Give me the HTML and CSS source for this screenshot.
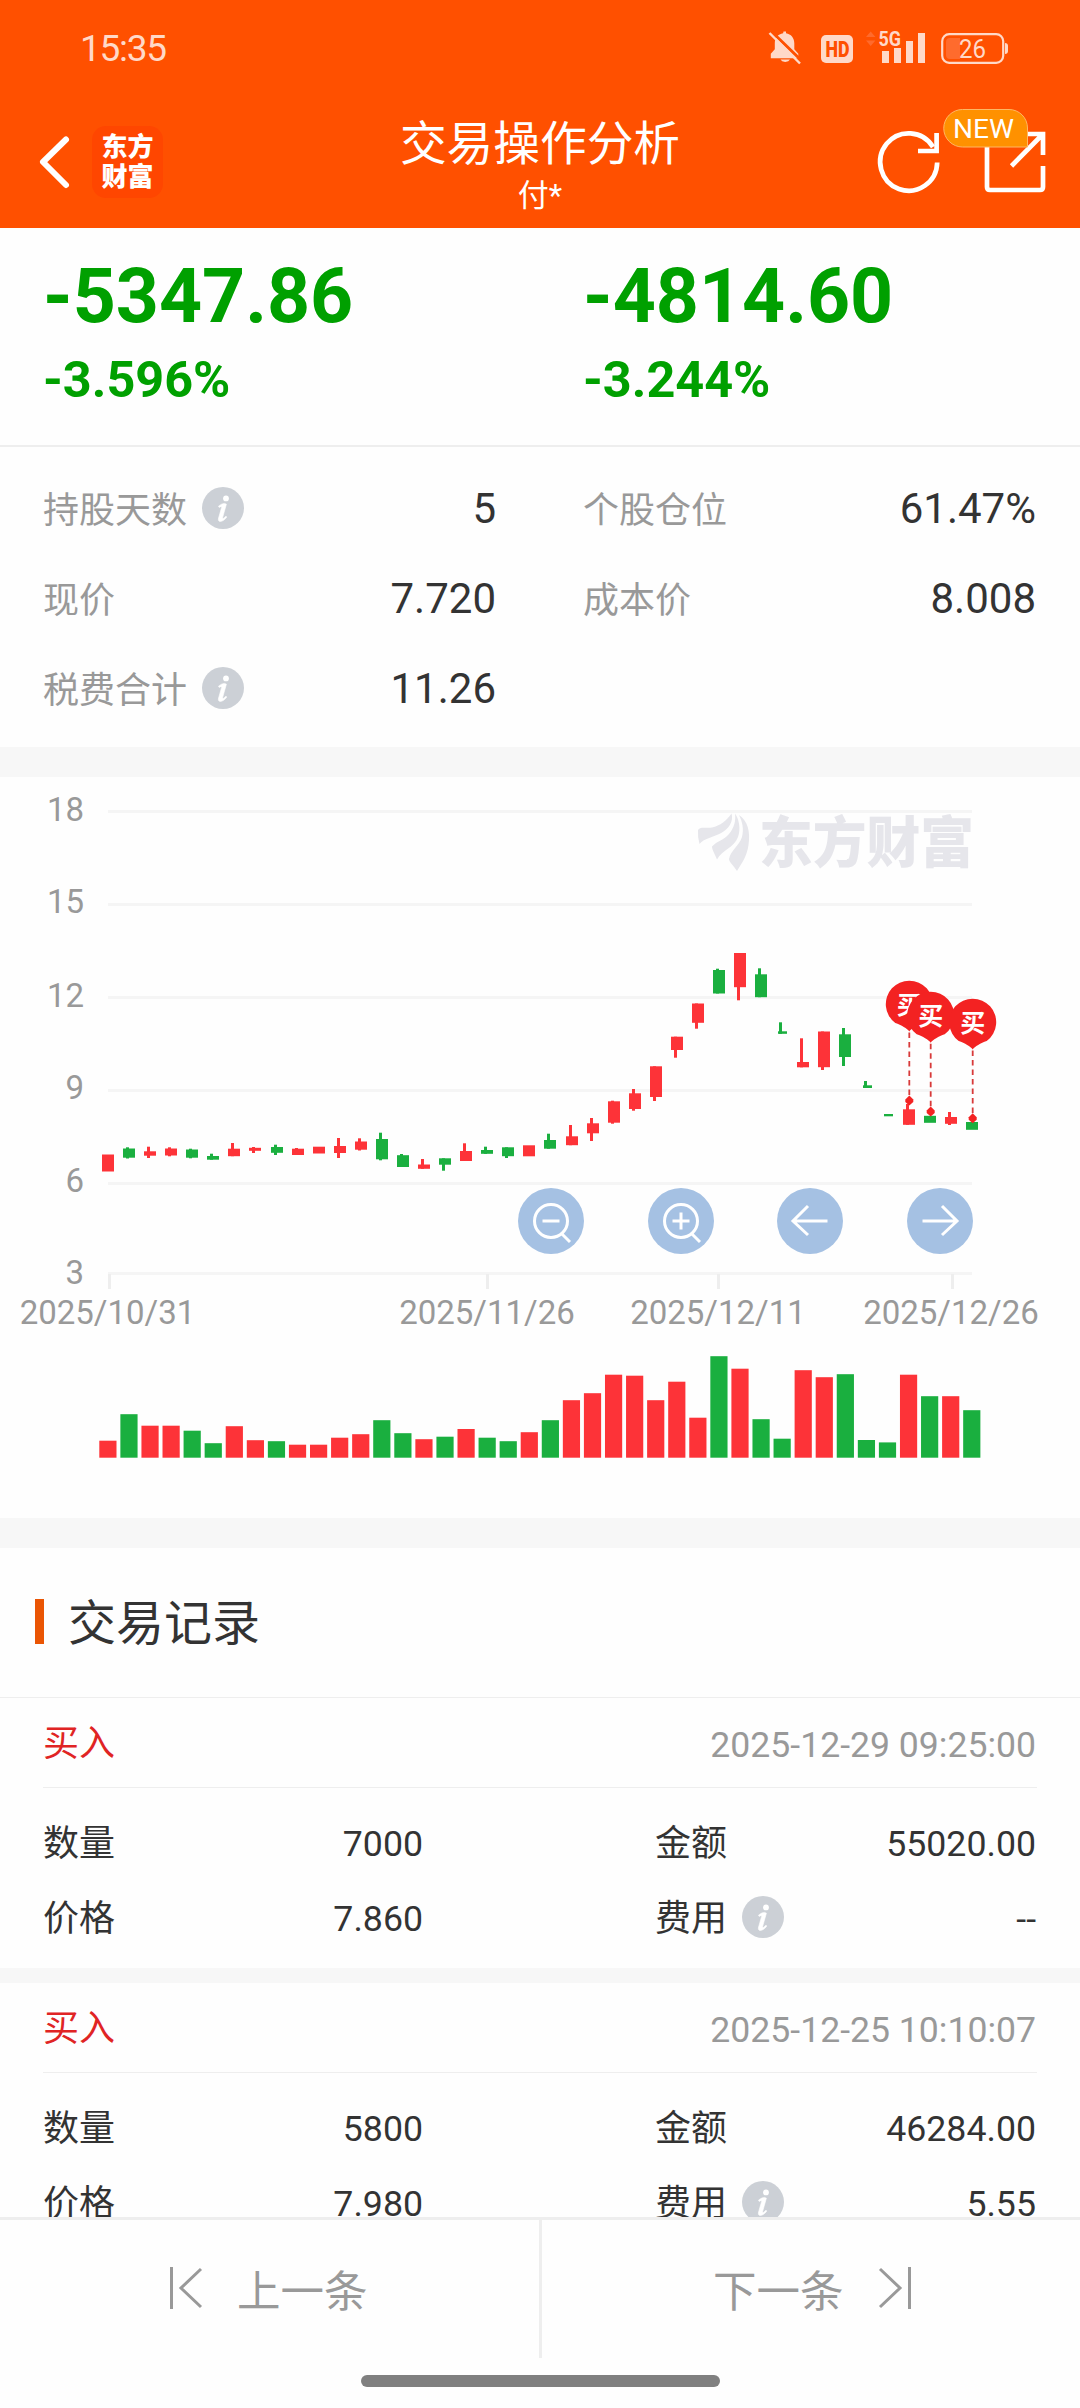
FILE: index.html
```html
<!DOCTYPE html>
<html lang="zh-CN">
<head>
<meta charset="utf-8">
<title>交易操作分析</title>
<link rel="stylesheet" href="styles.css">
</head>
<body>
<svg class="defs" width="0" height="0">
  <symbol id="info" viewBox="0 0 42 42">
    <circle cx="21" cy="21" r="21" fill="#ccd0d6"/>
    <circle cx="24" cy="11.4" r="2.9" fill="#fff"/>
    <path d="M16.5 19.2 C18.6 17.4 20.6 16.6 22.6 16.4 L24.4 17.2 L20.6 30.6 C20.5 31.6 21.2 31.6 22 31 L24 29.2 L24.8 30 C22.8 32.8 20.4 34.4 18.4 34.4 C16.6 34.4 16 33 16.6 31 L19.6 20.4 C19.8 19.4 19 19.4 17.2 20.4 Z" fill="#fff" stroke="#fff" stroke-width=".6"/>
  </symbol>
  <symbol id="pin" viewBox="-26 -26 52 56" overflow="visible">
    <path d="M0 27 C-2 24 -8 20.5 -14 18.5 A23.5 23.5 0 1 1 14 18.5 C8 20.5 2 24 0 27 Z" fill="#f32222"/>
  </symbol>
</svg>

<header class="header">
  <div class="status">
    <span class="clock">15:35</span>
    <svg class="status-icons" width="250" height="50" viewBox="762 24 250 50" fill="#ffd9c8">
      <path d="M783.5 31.5 h2.500 v1.800 c5 .8 8.300 4.700 8.300 10 v6 l4 4.500 v4.500 h-27.500 v-4.500 l4 -4.500 v-6 c0 -5.300 3.300 -9.200 8.300 -10 z M780.500 59.500 h9.500 a5 3.500 0 0 1 -9.500 0 z"/>
      <path d="M772 32 L803 62" stroke="#ff5000" stroke-width="3"/>
      <path d="M769.500 33 L800 63.500" stroke="#ffd9c8" stroke-width="2.400"/>
      <rect x="821" y="35" width="32" height="28" rx="5"/>
      <text x="825.500" y="57.200" font-size="22" font-weight="900" fill="#ff5000" textLength="24" lengthAdjust="spacingAndGlyphs">HD</text>
      <path d="M866 37 l4.700 -5.500 l4.700 5.500 z M866 40.500 h9.400 l-4.700 5.500 z" fill="#ff6a2c"/>
      <text x="878.500" y="46.300" font-size="20.500" font-weight="700" textLength="22.500" lengthAdjust="spacingAndGlyphs">5G</text>
      <path d="M882 51 h7 v12 h-7 z M894 48 h7 v15 h-7 z M906 41 h7 v22 h-7 z M918 33 h7 v30 h-7 z"/>
      <rect x="942.200" y="34.200" width="61" height="28.600" rx="7" fill="none" stroke="#ffd9c8" stroke-width="2.200"/>
      <path d="M950 38 h10 v21 h-10 a4 4 0 0 1 -4 -4 v-13 a4 4 0 0 1 4 -4 z" fill="#ff6b2d"/>
      <path d="M1005 43 a3 3 0 0 1 3 3 v5 a3 3 0 0 1 -3 3 z"/>
      <text x="959" y="57.500" font-size="25" textLength="27" lengthAdjust="spacingAndGlyphs">26</text>
    </svg>
  </div>
  <div class="titlebar">
    <div class="brand">
      <svg width="34" height="56" viewBox="37 135 34 56"><path d="M66 140.500 L43 163 L66 186" fill="none" stroke="#fff" stroke-width="6" stroke-linecap="round" stroke-linejoin="round"/></svg>
      <div class="logo"><span>东方</span><span>财富</span></div>
    </div>
    <div class="titles">
      <h1>交易操作分析</h1>
      <p>付*</p>
    </div>
    <svg class="actions" width="180" height="100" viewBox="870 104 180 100">
      <g fill="none" stroke="#fff" stroke-width="4.700">
        <path d="M937.200 162.500 A28.500 28.700 0 1 1 933 147"/>
        <path d="M936.600 133 V151 H918"/>
        <path d="M987 145 V187 Q987 190 990 190 H1040 Q1043 190 1043 187 V166"/>
        <path d="M1024 134 H1043 V155 M1043 134 L1011.500 166"/>
      </g>
      <path d="M962.500 109.500 H1009 A18.500 18.500 0 0 1 1027.500 128 V147 H962.500 A18.700 18.700 0 0 1 962.500 109.500 Z" fill="#ff9100" stroke="#ffb763" stroke-width="1"/>
      <text x="953" y="138" font-size="26" fill="#fff" textLength="61" lengthAdjust="spacingAndGlyphs">NEW</text>
    </svg>
  </div>
</header>

<main class="content">
  <section class="profit">
    <div><strong>-5347.86</strong><em>-3.596%</em></div>
    <div><strong>-4814.60</strong><em>-3.244%</em></div>
  </section>

  <section class="stats">
    <div class="stat"><label>持股天数</label><svg class="info"><use href="#info"/></svg><b>5</b></div>
    <div class="stat"><label>个股仓位</label><b>61.47%</b></div>
    <div class="stat"><label>现价</label><b>7.720</b></div>
    <div class="stat"><label>成本价</label><b>8.008</b></div>
    <div class="stat"><label>税费合计</label><svg class="info"><use href="#info"/></svg><b>11.26</b></div>
  </section>

  <section class="chart">
    <svg width="1080" height="741" viewBox="0 777 1080 741">
      <path d="M108 811.500 H972 M108 904.500 H972 M108 997.500 H972 M108 1090.500 H972 M108 1183.500 H972 M108 1273.500 H972" stroke="#f5f5f5" stroke-width="3"/>
      <path d="M109.500 1274 V1289 M487.500 1274 V1289 M718.500 1274 V1289 M952.500 1274 V1289" stroke="#eee" stroke-width="3"/>
      <g class="axis" text-anchor="end">
        <text x="84" y="821">18</text><text x="84" y="913">15</text><text x="84" y="1007">12</text>
        <text x="84" y="1099">9</text><text x="84" y="1192">6</text><text x="84" y="1284">3</text>
      </g>
      <g class="axis" text-anchor="middle">
        <text x="107.500" y="1324.300">2025/10/31</text><text x="487" y="1324.300">2025/11/26</text>
        <text x="718" y="1324.300">2025/12/11</text><text x="951" y="1324.300">2025/12/26</text>
      </g>
      <g fill="#e6e6eb">
        <path d="M698 830 C700 826 706 828.500 712 827.500 C720 826 727 820 731.500 813.500 C734 822 728 829 722 832.500 C715 837 704 838 699.500 844 Q697.500 837 698 830 Z"/>
        <path d="M735 813.500 C739 819 741 829 738 837 C734 848 722 850 717 859.500 C715 854 712 850 712 846.500 C717 841 724 840 729 834 C734 828 736 821 735 813.500 Z"/>
        <path d="M739 815 C748 821 750.500 832 748.500 845 C747 856 742 863 737 871 C734 866 729 862 729 859 C731 850 739 846 742 837 C744 829 742.500 822 739 815 Z"/>
        <text class="watermark" x="759" y="862" textLength="215" lengthAdjust="spacingAndGlyphs">东方财富</text>
      </g>
      <g id="candles"></g>
      <g id="volumes"></g>
      <g id="trades"></g>
    </svg>
    <nav class="controls">
      <svg viewBox="-33 -33 66 66"><circle r="33"/><path d="M-8.500 0 H8.500 M11 13 L19 21"/><circle class="ring" r="16.500"/></svg>
      <svg viewBox="-33 -33 66 66"><circle r="33"/><path d="M-8.500 0 H8.500 M0 -8.500 V8.500 M11 13 L19 21"/><circle class="ring" r="16.500"/></svg>
      <svg viewBox="-33 -33 66 66"><circle r="33"/><path d="M17.500 0 H-16.500 M-2 -15 L-17 0 L-2 14"/></svg>
      <svg viewBox="-33 -33 66 66"><circle r="33"/><path d="M-17.500 0 H16.500 M2 -15 L17 0 L2 14"/></svg>
    </nav>
  </section>

  <section class="records">
    <h2>交易记录</h2>
    <article class="record">
      <header><span>买入</span><time>2025-12-29 09:25:00</time></header>
      <div class="rows">
        <div><label>数量</label><b>7000</b></div>
        <div><label>金额</label><b>55020.00</b></div>
        <div><label>价格</label><b>7.860</b></div>
        <div><label>费用</label><svg class="info"><use href="#info"/></svg><b>--</b></div>
      </div>
    </article>
    <article class="record">
      <header><span>买入</span><time>2025-12-25 10:10:07</time></header>
      <div class="rows">
        <div><label>数量</label><b>5800</b></div>
        <div><label>金额</label><b>46284.00</b></div>
        <div><label>价格</label><b>7.980</b></div>
        <div><label>费用</label><svg class="info"><use href="#info"/></svg><b>5.55</b></div>
      </div>
    </article>
  </section>
</main>

<footer class="footer">
  <div class="pager">
    <button class="prev"><svg width="34" height="44" viewBox="0 0 34 44"><path d="M2.500 1 V43 M32 3 L12 22 L32 41"/></svg>上一条</button>
    <button class="next">下一条<svg width="34" height="44" viewBox="0 0 34 44"><path d="M31.500 1 V43 M2 3 L22 22 L2 41"/></svg></button>
  </div>
  <div class="home"></div>
</footer>
<script src="chart.js"></script>
</body>
</html>
```
FILE: styles.css
```css
* { box-sizing: border-box; margin: 0; padding: 0; }

body {
  width: 1080px;
  height: 2408px;
  display: flex;
  flex-direction: column;
  overflow: hidden;
  background: #fefefe;
  color: #333;
  font-family: Roboto, "Noto Sans CJK SC", sans-serif;
}

svg { display: block; flex: none; }
.defs { position: absolute; }
b, em, strong, h1, h2 { font-weight: 400; font-style: normal; }

/* header */
.header { flex: none; height: 228px; background: #ff5000; color: #fff; }
.status { display: flex; justify-content: space-between; height: 96px; padding: 24px 68px 0 80px; }
.clock { color: #ffd9c8; font-size: 37px; line-height: 50px; letter-spacing: -1.3px; }
.titlebar { display: grid; grid-template-columns: 210px 1fr 210px; height: 132px; }
.brand { display: flex; align-items: center; gap: 21px; padding-left: 37px; }
.logo {
  width: 71px; height: 72px; border-radius: 14px; background: #ff4600;
  display: flex; flex-direction: column; align-items: center; justify-content: center;
  font-size: 26px; font-weight: 900; line-height: 30px;
}
.titles { text-align: center; padding-top: 12px; }
.titles h1 { font-size: 46.7px; line-height: 72px; }
.titles p { font-size: 31px; line-height: 32px; }
.actions { margin-top: 8px; }

/* profit figures */
.content { flex: 1; min-height: 0; overflow: hidden; }
.profit { height: 219px; display: grid; grid-template-columns: 540px 540px; border-bottom: 2px solid #eee; color: #00a000; }
.profit div { padding: 26px 0 0 43px; }
.profit strong, .profit em { display: block; font-weight: 700; }
.profit strong { font-size: 75.2px; line-height: 84px; }
.profit em { font-size: 50.4px; line-height: 84px; }

.stats {
  height: 330px; padding: 17px 44px 0 43px; border-bottom: 30px solid #f7f7f7;
  display: grid; grid-template-columns: 453px 453px; column-gap: 87px; grid-auto-rows: 90px;
}
.stat { display: flex; align-items: center; }
label { font-size: 36px; line-height: 50px; }
.stat label { color: #999; padding-top: 3px; }
.info { width: 42px; height: 42px; margin: 0 0 2px 15px; }
.stat b { margin-left: auto; font-size: 42px; line-height: 50px; }

/* price chart */
.chart { position: relative; height: 771px; border-bottom: 30px solid #f7f7f7; }
.axis { font-size: 33px; fill: #999; }
.watermark { font-size: 55px; font-weight: 900; }
.controls { position: absolute; left: 518px; top: 411px; display: flex; gap: 63.500px; }
.controls svg { width: 66px; height: 66px; fill: #a5c1e3; }
.controls path, .controls .ring { fill: none; stroke: #fff; stroke-width: 3; }
.pin-label { font-size: 25px; font-weight: 700; fill: #fff; text-anchor: middle; }

/* trade records */
.records h2 {
  display: flex; align-items: center; gap: 24px; height: 150px; padding-left: 35px;
  font-size: 48px; line-height: 60px; border-bottom: 1px solid #eee; padding-top: 3px;
}
.records h2::before { content: ""; width: 9px; height: 45px; margin-bottom: 5px; background: #ea5504; }
.record { height: 285px; border-bottom: 15px solid #f7f7f7; padding: 0 43px; }
.record header { display: flex; justify-content: space-between; align-items: center; height: 90px; padding: 4px 1px 0 0; border-bottom: 1px solid #eee; font-size: 36px; }
.record header span { color: #e02424; line-height: 50px; padding-bottom: 2px; }
.record header time { color: #999; font-size: 35.6px; }
.rows { display: grid; grid-template-columns: 380px 381px; justify-content: space-between; grid-auto-rows: 75px; padding: 18px 1px 0 0; }
.rows div { display: flex; align-items: center; }
.rows .info { margin-bottom: 4px; }
.rows b { margin-left: auto; font-size: 35.7px; }

/* bottom pager */
.footer { flex: none; height: 191px; border-top: 3px solid #eee; background: #fefefe; }
.pager { display: grid; grid-template-columns: 542px 538px; height: 138px; }
.pager button { display: flex; align-items: center; border: 0; background: none; color: #999; font: inherit; font-size: 43.500px; gap: 34px; padding-bottom: 2px; }
.pager .prev { border-right: 3px solid #eee; padding-left: 169px; }
.pager .next { padding-left: 171px; }
.pager path { fill: none; stroke: #999; stroke-width: 3; }
.home { width: 359px; height: 12px; margin: 17px auto 0; border-radius: 6px; background: #808080; }
```
FILE: chart.js
```js
const NS = 'http://www.w3.org/2000/svg';
const COLORS = { R: '#fd3338', G: '#1aaf3f' };
const x0 = 108, step = 21.07, base = 1457.7;

// colour, high, body top, body bottom, low
const candles = [
  ['R',1154.5,1154.5,1171.5,1171.5],['G',1147.3,1148.5,1157.7,1158.5],['R',1146.7,1151.3,1155.7,1158],
  ['R',1147.3,1148.5,1155.5,1156.3],['G',1148.7,1149.5,1157.7,1158.3],['G',1153.7,1156,1159.7,1159.7],
  ['R',1143,1148.7,1156.2,1156.2],['R',1147,1147.8,1150.8,1153],['G',1144.7,1147,1152.8,1155],
  ['R',1148,1148.7,1155,1155],['R',1146.7,1146.7,1153.5,1153.5],['R',1138,1146,1153,1158],
  ['R',1138.3,1141.5,1149.7,1150.5],['G',1132.7,1139,1159.3,1160.3],['G',1154,1155.2,1167,1167],
  ['R',1159,1164.5,1168.8,1168.8],['G',1158.3,1158.3,1164.7,1170.7],['R',1143.3,1151,1161,1161],
  ['G',1146.7,1150,1153.8,1153.8],['G',1147.3,1147.3,1156.2,1158],['R',1145.3,1145.3,1156.3,1156.3],
  ['G',1133.7,1140,1148.7,1148.7],['R',1125,1136.3,1145.2,1145.2],['R',1118,1123.3,1133.3,1141],
  ['R',1100.7,1101.3,1122.7,1123.7],['R',1089,1093.3,1109,1110.7],['R',1066.3,1066.3,1097,1101],
  ['R',1036.7,1036.7,1050,1057.7],['R',1003.5,1003.5,1022.8,1028.7],['G',968.7,970,993.5,993.5],
  ['R',953,953,987.2,1000.3],['G',968.3,974.3,997.2,997.2],['G',1022.3,1031.3,1033.8,1033.8],
  ['R',1038.3,1062,1067.3,1067.3],['R',1031.5,1031.5,1067.2,1070],['G',1028,1034.3,1057,1066],
  ['G',1081,1085.3,1088,1088],['G',1114,1114,1116.3,1116.3],['R',1104,1109.3,1124.8,1124.8],
  ['G',1115.8,1115.8,1122.8,1122.8],['R',1112,1117,1123.8,1125],['G',1122,1122,1129.8,1129.8]
];
const narrow = [32, 36, 37];

const volumes = [17,43.5,32,32,27,14.5,31.5,17.5,16.5,13,13,20,23.5,37.5,24.5,18.5,21,28.7,20,16.5,25.5,
  37.5,57.5,64.5,83,82,57.5,76,40,101.5,89,38.5,19,87.5,80.5,83.5,17.7,15.3,83,61.5,61.5,47.5];

// pin centre x, pin centre y, dot y
const trades = [[909.3,1004.5,1100.5],[930.7,1015.7,1111.5],[972.7,1022.5,1118.3]];

function add(parent, name, attrs, text) {
  const el = document.createElementNS(NS, name);
  for (const k in attrs) el.setAttribute(k, attrs[k]);
  if (text) el.textContent = text;
  parent.appendChild(el);
}
function bar(parent, x, top, w, bottom, fill) {
  add(parent, 'rect', { x, y: top, width: w, height: bottom - top, fill });
}

const candleLayer = document.getElementById('candles');
const volumeLayer = document.getElementById('volumes');
candles.forEach(([c, high, top, bottom, low], i) => {
  const x = Math.round(x0 + i * step), fill = COLORS[c];
  const w = narrow.includes(i) ? 9 : 12;
  bar(candleLayer, x - 6 + (w === 9 ? 2 : 0), top, w, bottom, fill);
  if (low - high > bottom - top) bar(candleLayer, x - 3, high, 3, low, fill);
  bar(volumeLayer, x0 + i * step - 8.7, base - volumes[i], 17.2, base, fill);
});

const tradeLayer = document.getElementById('trades');
trades.forEach(([x, y, dot]) => {
  add(tradeLayer, 'path', { d: `M${x} ${y + 28} V${dot}`, stroke: '#d83a3a', 'stroke-width': 1.8, 'stroke-dasharray': '5.500 4' });
  add(tradeLayer, 'path', { d: `M${x} ${dot - 5} L${x + 4} ${dot - 1} V${dot + 1.5} L${x} ${dot + 5} L${x - 4} ${dot + 1.5} V${dot - 1} Z`, fill: '#f32222' });
  add(tradeLayer, 'use', { href: '#pin', x: x - 26, y: y - 26, width: 52, height: 56 });
  add(tradeLayer, 'text', { x, y: y + 9, class: 'pin-label' }, '买');
});
```
